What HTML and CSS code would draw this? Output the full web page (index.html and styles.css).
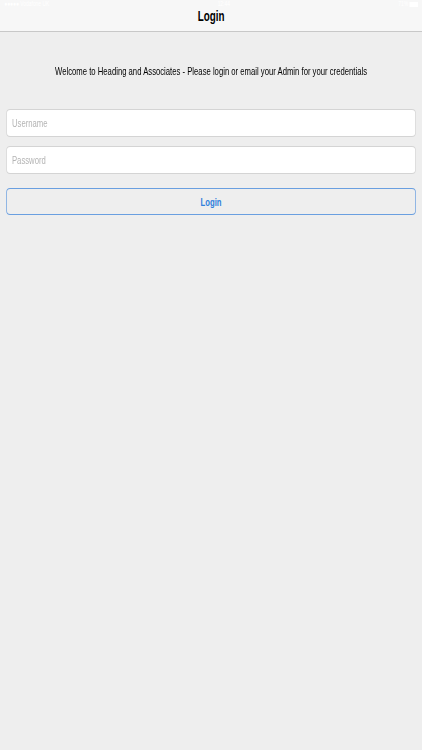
FILE: index.html
```html
<!DOCTYPE html>
<html>
<head>
<meta charset="utf-8">
<link rel="stylesheet" href="styles.css">
</head>
<body>
<div class="viewport">
  <div class="page">
    <header class="navbar">
      <div class="statusbar">
        <span class="sb-left">●●●●● Vodafone UK</span>
        <span class="sb-center">12:44</span>
        <span class="sb-right">71% <span class="battery"></span></span>
      </div>
      <h1 class="title">Login</h1>
    </header>
    <main class="content">
      <p class="welcome">Welcome to Heading and Associates - Please login or email your Admin for your credentials</p>
      <form class="form">
        <input class="field" type="text" placeholder="Username">
        <input class="field" type="password" placeholder="Password">
        <button class="btn" type="button">Login</button>
      </form>
    </main>
  </div>
</div>
</body>
</html>
```
FILE: styles.css
```css
html, body {
  margin: 0;
  padding: 0;
  overflow: hidden;
}
body {
  background: #eeeeee;
  font-family: "Liberation Sans", Arial, sans-serif;
  width: 422px;
  height: 750px;
}
.viewport {
  width: 422px;
  height: 750px;
  overflow: hidden;
}
/* The reference is a tablet screen squeezed horizontally: lay out at
   the wider width and compress on the x axis. */
.page {
  width: 603px;
  height: 750px;
  transform: scaleX(0.7);
  transform-origin: 0 0;
}
.navbar {
  position: relative;
  height: 31px;
  background: #f7f7f7;
  border-bottom: 1px solid #c8c8c8;
}
.statusbar {
  position: absolute;
  top: 0;
  left: 0;
  right: 0;
  height: 8px;
  display: flex;
  justify-content: space-between;
  align-items: center;
  padding: 0 6px;
  font-size: 7px;
  line-height: 8px;
  color: #ffffff;
}
.battery {
  display: inline-block;
  width: 12px;
  height: 5px;
  background: #ffffff;
  vertical-align: middle;
}
.title {
  margin: 0;
  padding-top: 8px;
  text-align: center;
  font-size: 14px;
  line-height: 16px;
  font-weight: bold;
  color: #000;
}
.content {
  padding: 0 8.6px;
}
.welcome {
  margin: 32px 0 0;
  text-align: center;
  font-size: 11px;
  line-height: 14px;
  white-space: nowrap;
  color: #000;
}
.form {
  margin-top: 31px;
  display: flex;
  flex-direction: column;
}
.field {
  box-sizing: border-box;
  height: 28px;
  width: 100%;
  margin: 0 0 9px;
  padding: 0 7.5px;
  border: 1px solid #d4d4d4;
  border-radius: 5.5px / 4px;
  background: #ffffff;
  font-family: inherit;
  font-size: 11px;
  color: #222;
  outline: none;
}
.field::placeholder {
  color: #b4b4b4;
}
.field + .field {
  margin-bottom: 14px;
}
.btn {
  box-sizing: border-box;
  height: 27px;
  width: 100%;
  border: 1.4px solid #6a9fe0;
  border-radius: 5.5px / 4px;
  background: #eeeeee;
  color: #2f7fdc;
  font-family: inherit;
  font-size: 11px;
  font-weight: bold;
  cursor: pointer;
}
```
